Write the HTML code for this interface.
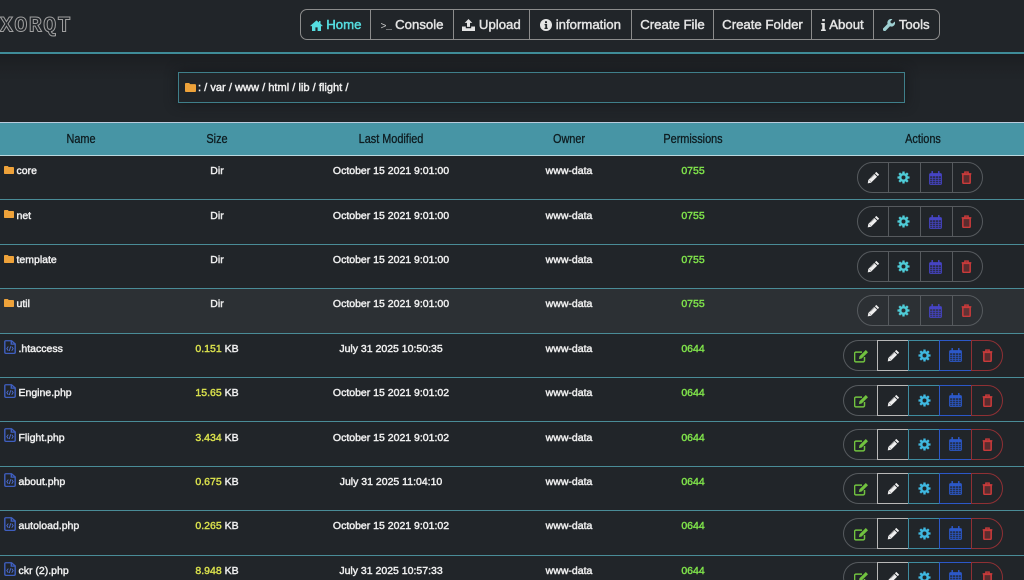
<!DOCTYPE html>
<html><head><meta charset="utf-8"><style>
html,body{margin:0;padding:0;width:1024px;height:580px;overflow:hidden;background:#212529}
body{position:relative;font-family:"Liberation Sans",sans-serif;color:#f0f0f0}
.a{position:absolute}
#logo{left:0;top:13px;font:bold 21.5px/26px "Liberation Mono",monospace;color:#212529;-webkit-text-stroke:1px #a0a0a0;letter-spacing:1.500px;white-space:nowrap;transform:scaleY(1.05)}
#nav{left:300px;top:9px;width:638px;height:29px;border:1.3px solid #8c8c8c;border-radius:7px}
.n{position:absolute;top:0;height:29px;line-height:29px;font-size:13.2px;color:#e4e4e4;-webkit-text-stroke:.45px #e4e4e4;text-align:center;border-left:1.3px solid #8c8c8c;white-space:nowrap;box-sizing:border-box}
.n svg{vertical-align:-1.5px}
#bar{left:0;top:52px;width:1024px;height:1.5px;background:#3f8c98}
#band{left:0;top:54px;width:1024px;height:68px;background:linear-gradient(#1b1e21,#1f2226 20%,#212529 40%)}
#crumb{left:178px;top:72px;width:725px;height:29px;border:1px solid #3f7f8a;background:#212529;box-shadow:0 0 12px #15171a;font-size:11.1px;-webkit-text-stroke:.45px #eee;line-height:30px;white-space:nowrap;color:#eee}
#head{left:0;top:122px;width:1024px;height:32px;background:#4795a5;border-top:1px solid #bcd;border-bottom:1.5px solid #b9d8de}
.h{position:absolute;top:0;line-height:33px;font-size:12.5px;color:#0e1c20;-webkit-text-stroke:.3px #0e1c20;white-space:nowrap;transform:translateX(-50%) scaleX(.87)}
.r{position:absolute;left:0;width:1024px;height:44.4px;border-bottom:1.2px solid #4a8c97;box-sizing:border-box}
.t,.nm{position:absolute;top:8.200px;font-size:10.5px;-webkit-text-stroke:.45px #eee;line-height:14px;color:#eee;white-space:nowrap}
.t{transform:translateX(-50%)}
.nm{left:16.500px}
.f{left:18.500px}
.y{color:#d8df4c;-webkit-text-stroke:.45px #d8df4c}.g{color:#7ee04a;-webkit-text-stroke:.45px #7ee04a}
.ic{position:absolute}
.grp{position:absolute;left:857px;top:6px;width:124px;height:29px;border:1.2px solid #565a5e;border-radius:16px}
.grp i{position:absolute;top:0;height:29px;border-left:1.2px solid #565a5e}
.b{position:absolute;top:6.500px;height:31px;box-sizing:border-box}
.b1{left:843px;width:35px;border:1.2px solid #565a5e;border-right:0;border-radius:16px 0 0 16px}
.b2{left:877px;width:32px;border:1.3px solid #b8b8b8}
.b3{left:908px;width:32px;border:1.2px solid #3f8ca0}
.b4{left:939px;width:33px;border:1.2px solid #2c58c8}
.b5{left:971px;width:32px;border:1.2px solid #8f3034;border-radius:0 16px 16px 0}
.fo{left:4px;top:10px}
.ph{left:4px;top:6px}
</style></head><body>
<svg width="0" height="0" style="position:absolute"><defs>
<symbol id="fold" viewBox="0 0 12 10" preserveAspectRatio="none"><path d="M1 0h3.500l1.200 1.300H11a1 1 0 0 1 1 1V9a1 1 0 0 1-1 1H1a1 1 0 0 1-1-1V1a1 1 0 0 1 1-1z" fill="#eea23a"/></symbol>
<symbol id="php" viewBox="0 0 12 16" preserveAspectRatio="none"><path d="M1.800.8h5.700L11.200 4.500V14a1.300 1.300 0 0 1-1.300 1.300H2.100A1.300 1.300 0 0 1 .8 14V2A1.200 1.200 0 0 1 1.800.8zM7.300.8V4.700h3.900" fill="none" stroke="#3f5fc0" stroke-width="1.400"/><path d="M4.300 7.500L2.800 9.900l1.500 2.400M7.700 7.500l1.500 2.400-1.500 2.400M6.700 7.200L5.300 12.600" fill="none" stroke="#4f70d8" stroke-width=".9"/></symbol>
<symbol id="pen" viewBox="0 0 14 14"><path d="M10 .9l3.100 3.100-1.500 1.500-3.100-3.100zM7.800 3.100l3.100 3.100-6.600 6.500-3.500.6.600-3.600z" fill="#efefef"/><path d="M2.500 9.900l1.800 1.800M3.800 8.200l5-5" stroke="#8a8a8a" stroke-width=".6"/></symbol>
<symbol id="gear" viewBox="0 0 14 14"><circle cx="7" cy="7" r="3.500" fill="none" stroke="currentColor" stroke-width="2.700"/><path d="M7 .5v2.500M7 11v2.500M.5 7H3M11 7h2.500M2.400 2.400l1.800 1.800M9.800 9.800l1.800 1.800M11.600 2.400L9.800 4.200M4.200 9.800l-1.800 1.800" stroke="currentColor" stroke-width="2.500"/></symbol>
<symbol id="cal" viewBox="0 0 13 14"><path d="M.6 3.600a1 1 0 0 1 1-1h9.800a1 1 0 0 1 1 1v8.800a1 1 0 0 1-1 1H1.600a1 1 0 0 1-1-1z" fill="currentColor" fill-opacity=".25" stroke="currentColor" stroke-width="1"/><path d="M.6 2.800h11.800v2.400H.6z" fill="currentColor"/><path d="M3.200.6v3M9.800.6v3" stroke="currentColor" stroke-width="1.500" stroke-linecap="round"/><path d="M.6 7.400h11.800M.6 9.400h11.800M.6 11.400h11.800M3.400 5v8M6.500 5v8M9.600 5v8" stroke="currentColor" stroke-width=".65"/></symbol>
<symbol id="del" viewBox="0 0 12 14"><path d="M2 3.600h8v8.700a1.100 1.100 0 0 1-1.100 1.100H3.100a1.100 1.100 0 0 1-1.100-1.100z" fill="currentColor" fill-opacity=".35" stroke="currentColor" stroke-width="1.700"/><path d="M.7 3h10.600M4.200 2.800V1.100h3.600v1.700" fill="none" stroke="currentColor" stroke-width="1.500"/></symbol>
<symbol id="edit" viewBox="0 0 15 14"><path d="M10.500 8v3.500a1.400 1.400 0 0 1-1.400 1.400H2a1.400 1.400 0 0 1-1.400-1.400V4.500A1.400 1.400 0 0 1 2 3.100h6" fill="none" stroke="#71c23f" stroke-width="1.500"/><path d="M11.800 1l2.200 2.200-6.300 6.300-2.800.6.600-2.800z" fill="#71c23f"/></symbol>
</defs></svg>

<div class="a" id="band"></div>
<div class="a" id="logo">XORQT</div>
<div class="a" id="nav">
<div class="n" style="left:0;width:69px;border-left:0;color:#55dde0;-webkit-text-stroke-color:#55dde0"><svg width="13" height="11" viewBox="0 0 13 11"><path d="M6.500.4L.3 5.700l.7.8 1-.8V11h3.400V7.400h2.200V11H11V5.700l1 .8.700-.8-2.200-1.900V1H9v1.500z" fill="#55dde0"/></svg> Home</div>
<div class="n" style="left:69px;width:83px"><span style="font:10px 'Liberation Mono',monospace;letter-spacing:-.5px;color:#ccc;-webkit-text-stroke:0">&gt;_</span> Console</div>
<div class="n" style="left:152px;width:76px"><svg width="13" height="12" viewBox="0 0 13 12"><path d="M6.500 0L10.300 3.900H8v4H5v-4H2.700zM0 7.500h3.800v1.800h5.400V7.500H13V12H0z" fill="#e4e4e4"/></svg> Upload</div>
<div class="n" style="left:228px;width:102px"><svg width="12" height="12" viewBox="0 0 12 12"><circle cx="6" cy="6" r="6" fill="#e4e4e4"/><path d="M5 2.300h2v1.800H5zM4.600 5h2.500v3.800h.6V10H4.500V8.800h.8V6.200h-.7z" fill="#212529"/></svg> information</div>
<div class="n" style="left:330px;width:82px">Create File</div>
<div class="n" style="left:412px;width:98px">Create Folder</div>
<div class="n" style="left:510px;width:62px"><svg width="5" height="12" viewBox="0 0 5 12"><path d="M1.200 0h2.600v2.300H1.200zM.3 4h3.500v6.500h1V12H0v-1.500h1.200V5.500H.3z" fill="#e4e4e4"/></svg> About</div>
<div class="n" style="left:572px;width:66px"><svg width="12" height="12" viewBox="0 0 12 12"><path d="M11.700 2.500L9.700 4.500 7.800 4.100 7.400 2.200 9.400.3A3.600 3.600 0 0 0 4.600 4.900L.4 9.100a1.700 1.700 0 0 0 2.400 2.500L7 7.300a3.600 3.600 0 0 0 4.700-4.800z" fill="#9fd0d2"/></svg> Tools</div>
</div>
<div class="a" id="bar"></div>
<div class="a" id="crumb"><svg style="position:absolute;left:6px;top:10px" width="11" height="9"><use href="#fold"/></svg><span style="position:absolute;left:19px;top:0">: / var / www / html / lib / flight /</span></div>

<div class="a" id="head">
<span class="h" style="left:81px">Name</span><span class="h" style="left:217px">Size</span><span class="h" style="left:391px">Last Modified</span><span class="h" style="left:569px">Owner</span><span class="h" style="left:693px">Permissions</span><span class="h" style="left:923px">Actions</span>
</div>

<div class="r" style="top:156px"><svg class="ic fo" width="10" height="8"><use href="#fold"/></svg><span class="nm">core</span><span class="t" style="left:217px">Dir</span><span class="t" style="left:391px">October 15 2021 9:01:00</span><span class="t" style="left:569px">www-data</span><span class="t g" style="left:693px">0755</span>
<div class="grp"><i style="left:30px"></i><i style="left:62px"></i><i style="left:94px"></i><svg class="ic" style="left:9px;top:8px" width="13" height="13"><use href="#pen"/></svg><svg class="ic" style="left:39px;top:8px;color:#4fcbd6" width="13" height="13"><use href="#gear"/></svg><svg class="ic" style="left:71px;top:8px;color:#4644c4" width="13" height="14"><use href="#cal"/></svg><svg class="ic" style="left:103px;top:8px;color:#c83a3a" width="11" height="13"><use href="#del"/></svg></div></div>

<div class="r" style="top:200.400px"><svg class="ic fo" width="10" height="8"><use href="#fold"/></svg><span class="nm">net</span><span class="t" style="left:217px">Dir</span><span class="t" style="left:391px">October 15 2021 9:01:00</span><span class="t" style="left:569px">www-data</span><span class="t g" style="left:693px">0755</span>
<div class="grp"><i style="left:30px"></i><i style="left:62px"></i><i style="left:94px"></i><svg class="ic" style="left:9px;top:8px" width="13" height="13"><use href="#pen"/></svg><svg class="ic" style="left:39px;top:8px;color:#4fcbd6" width="13" height="13"><use href="#gear"/></svg><svg class="ic" style="left:71px;top:8px;color:#4644c4" width="13" height="14"><use href="#cal"/></svg><svg class="ic" style="left:103px;top:8px;color:#c83a3a" width="11" height="13"><use href="#del"/></svg></div></div>

<div class="r" style="top:244.800px"><svg class="ic fo" width="10" height="8"><use href="#fold"/></svg><span class="nm">template</span><span class="t" style="left:217px">Dir</span><span class="t" style="left:391px">October 15 2021 9:01:00</span><span class="t" style="left:569px">www-data</span><span class="t g" style="left:693px">0755</span>
<div class="grp"><i style="left:30px"></i><i style="left:62px"></i><i style="left:94px"></i><svg class="ic" style="left:9px;top:8px" width="13" height="13"><use href="#pen"/></svg><svg class="ic" style="left:39px;top:8px;color:#4fcbd6" width="13" height="13"><use href="#gear"/></svg><svg class="ic" style="left:71px;top:8px;color:#4644c4" width="13" height="14"><use href="#cal"/></svg><svg class="ic" style="left:103px;top:8px;color:#c83a3a" width="11" height="13"><use href="#del"/></svg></div></div>

<div class="r" style="top:289.200px;background:#2c3034"><svg class="ic fo" width="10" height="8"><use href="#fold"/></svg><span class="nm">util</span><span class="t" style="left:217px">Dir</span><span class="t" style="left:391px">October 15 2021 9:01:00</span><span class="t" style="left:569px">www-data</span><span class="t g" style="left:693px">0755</span>
<div class="grp"><i style="left:30px"></i><i style="left:62px"></i><i style="left:94px"></i><svg class="ic" style="left:9px;top:8px" width="13" height="13"><use href="#pen"/></svg><svg class="ic" style="left:39px;top:8px;color:#4fcbd6" width="13" height="13"><use href="#gear"/></svg><svg class="ic" style="left:71px;top:8px;color:#4644c4" width="13" height="14"><use href="#cal"/></svg><svg class="ic" style="left:103px;top:8px;color:#c83a3a" width="11" height="13"><use href="#del"/></svg></div></div>

<div class="r" style="top:333.600px"><svg class="ic ph" width="12" height="14"><use href="#php"/></svg><span class="nm f">.htaccess</span><span class="t" style="left:217px"><span class="y">0.151</span> KB</span><span class="t" style="left:391px">July 31 2025 10:50:35</span><span class="t" style="left:569px">www-data</span><span class="t g" style="left:693px">0644</span>
<div class="b b1"><svg class="ic" style="left:10px;top:8px" width="15" height="14"><use href="#edit"/></svg></div><div class="b b2"><svg class="ic" style="left:9px;top:8px" width="13" height="13"><use href="#pen"/></svg></div><div class="b b3"><svg class="ic" style="left:9px;top:8px;color:#3fb8e0" width="13" height="13"><use href="#gear"/></svg></div><div class="b b4"><svg class="ic" style="left:9px;top:7px;color:#2c58c8" width="13" height="14"><use href="#cal"/></svg></div><div class="b b5"><svg class="ic" style="left:10px;top:8px;color:#c83a3a" width="11" height="13"><use href="#del"/></svg></div></div>

<div class="r" style="top:378px"><svg class="ic ph" width="12" height="14"><use href="#php"/></svg><span class="nm f">Engine.php</span><span class="t" style="left:217px"><span class="y">15.65</span> KB</span><span class="t" style="left:391px">October 15 2021 9:01:02</span><span class="t" style="left:569px">www-data</span><span class="t g" style="left:693px">0644</span>
<div class="b b1"><svg class="ic" style="left:10px;top:8px" width="15" height="14"><use href="#edit"/></svg></div><div class="b b2"><svg class="ic" style="left:9px;top:8px" width="13" height="13"><use href="#pen"/></svg></div><div class="b b3"><svg class="ic" style="left:9px;top:8px;color:#3fb8e0" width="13" height="13"><use href="#gear"/></svg></div><div class="b b4"><svg class="ic" style="left:9px;top:7px;color:#2c58c8" width="13" height="14"><use href="#cal"/></svg></div><div class="b b5"><svg class="ic" style="left:10px;top:8px;color:#c83a3a" width="11" height="13"><use href="#del"/></svg></div></div>

<div class="r" style="top:422.400px"><svg class="ic ph" width="12" height="14"><use href="#php"/></svg><span class="nm f">Flight.php</span><span class="t" style="left:217px"><span class="y">3.434</span> KB</span><span class="t" style="left:391px">October 15 2021 9:01:02</span><span class="t" style="left:569px">www-data</span><span class="t g" style="left:693px">0644</span>
<div class="b b1"><svg class="ic" style="left:10px;top:8px" width="15" height="14"><use href="#edit"/></svg></div><div class="b b2"><svg class="ic" style="left:9px;top:8px" width="13" height="13"><use href="#pen"/></svg></div><div class="b b3"><svg class="ic" style="left:9px;top:8px;color:#3fb8e0" width="13" height="13"><use href="#gear"/></svg></div><div class="b b4"><svg class="ic" style="left:9px;top:7px;color:#2c58c8" width="13" height="14"><use href="#cal"/></svg></div><div class="b b5"><svg class="ic" style="left:10px;top:8px;color:#c83a3a" width="11" height="13"><use href="#del"/></svg></div></div>

<div class="r" style="top:466.800px"><svg class="ic ph" width="12" height="14"><use href="#php"/></svg><span class="nm f">about.php</span><span class="t" style="left:217px"><span class="y">0.675</span> KB</span><span class="t" style="left:391px">July 31 2025 11:04:10</span><span class="t" style="left:569px">www-data</span><span class="t g" style="left:693px">0644</span>
<div class="b b1"><svg class="ic" style="left:10px;top:8px" width="15" height="14"><use href="#edit"/></svg></div><div class="b b2"><svg class="ic" style="left:9px;top:8px" width="13" height="13"><use href="#pen"/></svg></div><div class="b b3"><svg class="ic" style="left:9px;top:8px;color:#3fb8e0" width="13" height="13"><use href="#gear"/></svg></div><div class="b b4"><svg class="ic" style="left:9px;top:7px;color:#2c58c8" width="13" height="14"><use href="#cal"/></svg></div><div class="b b5"><svg class="ic" style="left:10px;top:8px;color:#c83a3a" width="11" height="13"><use href="#del"/></svg></div></div>

<div class="r" style="top:511.200px"><svg class="ic ph" width="12" height="14"><use href="#php"/></svg><span class="nm f">autoload.php</span><span class="t" style="left:217px"><span class="y">0.265</span> KB</span><span class="t" style="left:391px">October 15 2021 9:01:02</span><span class="t" style="left:569px">www-data</span><span class="t g" style="left:693px">0644</span>
<div class="b b1"><svg class="ic" style="left:10px;top:8px" width="15" height="14"><use href="#edit"/></svg></div><div class="b b2"><svg class="ic" style="left:9px;top:8px" width="13" height="13"><use href="#pen"/></svg></div><div class="b b3"><svg class="ic" style="left:9px;top:8px;color:#3fb8e0" width="13" height="13"><use href="#gear"/></svg></div><div class="b b4"><svg class="ic" style="left:9px;top:7px;color:#2c58c8" width="13" height="14"><use href="#cal"/></svg></div><div class="b b5"><svg class="ic" style="left:10px;top:8px;color:#c83a3a" width="11" height="13"><use href="#del"/></svg></div></div>

<div class="r" style="top:555.600px"><svg class="ic ph" width="12" height="14"><use href="#php"/></svg><span class="nm f">ckr (2).php</span><span class="t" style="left:217px"><span class="y">8.948</span> KB</span><span class="t" style="left:391px">July 31 2025 10:57:33</span><span class="t" style="left:569px">www-data</span><span class="t g" style="left:693px">0644</span>
<div class="b b1"><svg class="ic" style="left:10px;top:8px" width="15" height="14"><use href="#edit"/></svg></div><div class="b b2"><svg class="ic" style="left:9px;top:8px" width="13" height="13"><use href="#pen"/></svg></div><div class="b b3"><svg class="ic" style="left:9px;top:8px;color:#3fb8e0" width="13" height="13"><use href="#gear"/></svg></div><div class="b b4"><svg class="ic" style="left:9px;top:7px;color:#2c58c8" width="13" height="14"><use href="#cal"/></svg></div><div class="b b5"><svg class="ic" style="left:10px;top:8px;color:#c83a3a" width="11" height="13"><use href="#del"/></svg></div></div>
</body></html>
